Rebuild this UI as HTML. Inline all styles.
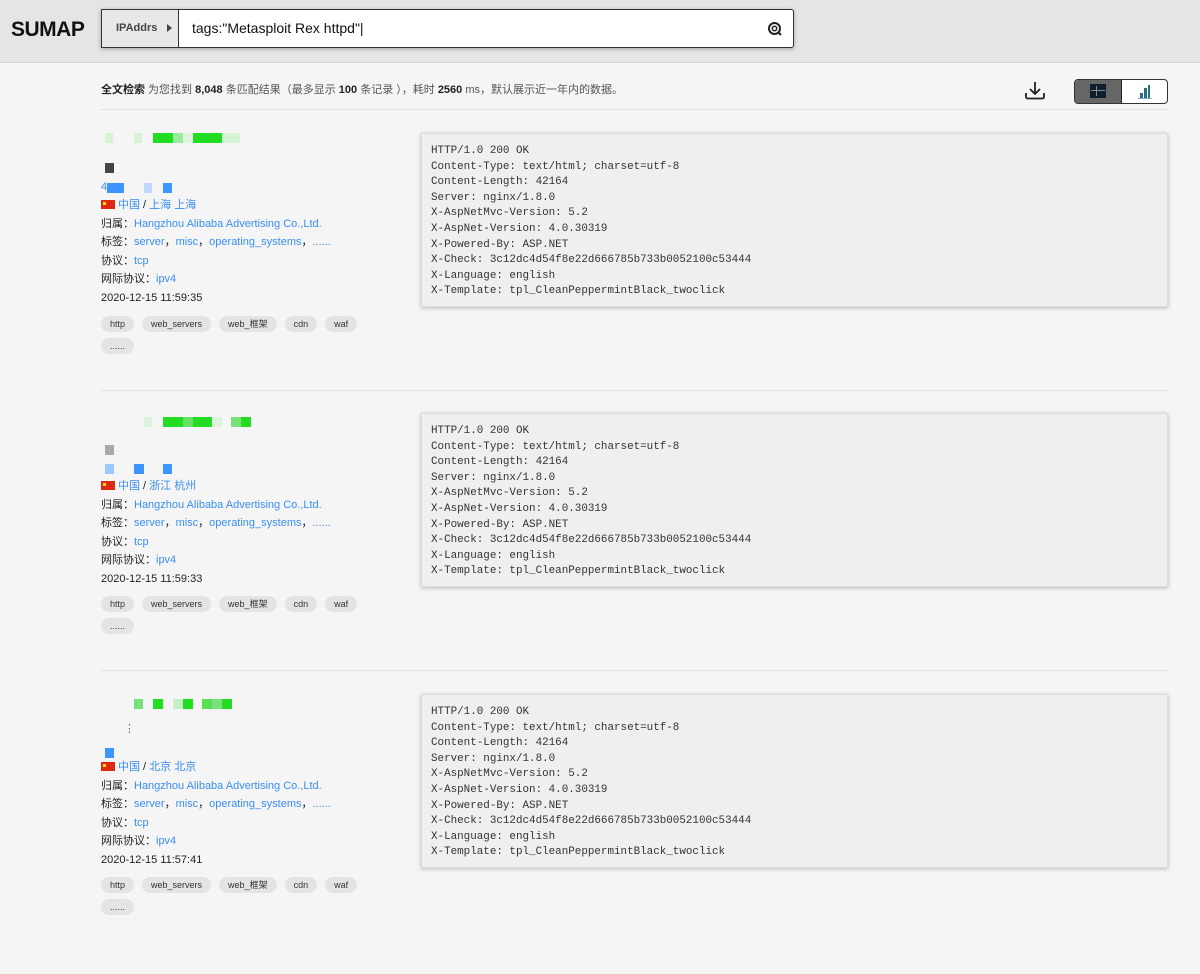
<!DOCTYPE html>
<html><head><meta charset="utf-8">
<style>
*{margin:0;padding:0;box-sizing:border-box}
body{width:1200px;height:906px;overflow:hidden;background:#f5f5f5;font-family:"Liberation Sans","Noto Sans CJK SC",sans-serif;color:#222;position:relative}
.hdr{position:absolute;left:0;top:0;width:1200px;height:63px;background:#e5e5e5;border-bottom:1px solid #d6d6d6}
.logo{position:absolute;left:11px;top:18px;font:900 21px/24px "Liberation Sans",sans-serif;letter-spacing:-0.5px;color:#111}
.search{position:absolute;left:101px;top:9px;width:693px;height:39px;border:1px solid #333;background:#fff;box-shadow:0 1px 4px rgba(0,0,0,.3);border-radius:0 3px 3px 0}
.ipa{position:absolute;left:0;top:0;width:77px;height:37px;background:#e8e8e8;border-right:1px solid #333;font:bold 11px "Liberation Sans",sans-serif;color:#444;line-height:37px;padding-left:14px}
.ipa:after{content:"";position:absolute;right:6px;top:14px;border-left:5px solid #444;border-top:4px solid transparent;border-bottom:4px solid transparent}
.q{position:absolute;left:90px;top:0;line-height:37px;font-size:14px;color:#111}
.sum{position:absolute;left:101px;top:81px;font-size:11px;color:#555}
.sum b{color:#222}
.hr{position:absolute;left:101px;width:1067px;height:1px;background:#e0e0e0}
.tg{position:absolute;top:79px;left:1074px;width:94px;height:25px;border:1px solid #333;border-radius:4px;overflow:hidden;background:#fff}
.rec{position:absolute;left:0;width:1200px;height:280px}
.px{position:absolute;height:10px}
.info{position:absolute;left:101px;font-size:11px;line-height:18.6px;color:#222}
.info a{color:#3a8ef0;text-decoration:none}
.flag{display:inline-block;width:14px;height:9px;background:#de2910;vertical-align:-1px;margin-right:3px;position:relative}
.flag:after{content:"";position:absolute;left:2px;top:2px;width:3px;height:3px;background:#ffde00}
.tags{position:absolute;left:101px;top:183px;width:300px;font-size:0}
.tag{display:inline-block;height:16px;line-height:16px;padding:0 9px;border-radius:8px;background:#e4e4e4;font-size:9px;color:#333;margin:0 8px 6px 0}
.code{position:absolute;left:421px;top:0;width:747px;height:174px;background:#efefef;border:1px solid #ddd;box-shadow:0 1px 4px rgba(0,0,0,.25);padding:10px 9px;font:10.9px/15.6px "Liberation Mono","DejaVu Sans Mono",monospace;color:#333;white-space:pre}
</style></head><body>
<div class="hdr">
<div class="logo">SUMAP</div>
<div class="search"><div class="ipa">IPAddrs</div><div class="q">tags:"Metasploit Rex httpd"|</div>
<svg style="position:absolute;left:665px;top:11px" width="16" height="16" viewBox="0 0 16 16"><circle cx="7.5" cy="7.5" r="5.5" fill="none" stroke="#222" stroke-width="2"/><circle cx="7.5" cy="7.5" r="2.2" fill="none" stroke="#222" stroke-width="1.5"/><path d="M11 11l3 3" stroke="#222" stroke-width="2"/></svg></div>
</div>
<div class="sum"><b>全文检索</b> 为您找到 <b>8,048</b> 条匹配结果（最多显示 <b>100</b> 条记录 ），耗时 <b>2560</b> ms，默认展示近一年内的数据。</div>
<svg style="position:absolute;left:1024px;top:81px" width="22" height="20" viewBox="0 0 22 20"><path d="M11 1v12M6 8l5 5 5-5" fill="none" stroke="#222" stroke-width="1.8"/><path d="M2 12v3.5q0 2 2 2h14q2 0 2-2V12" fill="none" stroke="#222" stroke-width="1.8"/></svg>
<div class="tg"><div style="position:absolute;left:0;top:0;width:47px;height:23px;background:#666;border-right:1px solid #222"></div>
<div style="position:absolute;left:15px;top:4px;width:16px;height:14px;background:#0f1e2e"></div>
<div style="position:absolute;left:21px;top:6px;width:1px;height:10px;background:#888"></div>
<div style="position:absolute;left:16px;top:10px;width:14px;height:1px;background:#888"></div>
<div style="position:absolute;left:65px;top:13px;width:3px;height:5px;background:#2a6f7f"></div>
<div style="position:absolute;left:69px;top:8px;width:3px;height:10px;background:#2a6f7f"></div>
<div style="position:absolute;left:73px;top:5px;width:2px;height:13px;background:#2a6f7f"></div>
<div style="position:absolute;left:63px;top:18px;width:14px;height:1px;background:#8ab"></div></div>
<div class="hr" style="top:109px"></div>
<div class="hr" style="top:390px"></div>
<div class="hr" style="top:670px"></div>

<!-- record 1 -->
<div class="rec" style="top:133px">
<div class="px" style="left:105px;top:0;width:8px;background:#d6f3d6"></div>
<div class="px" style="left:134px;top:0;width:8px;background:#d6f3d6"></div>
<div class="px" style="left:153px;top:0;width:20px;background:#22dd22"></div>
<div class="px" style="left:173px;top:0;width:10px;background:#99ea99"></div>
<div class="px" style="left:183px;top:0;width:10px;background:#e0f3e0"></div>
<div class="px" style="left:193px;top:0;width:29px;background:#22dd22"></div>
<div class="px" style="left:222px;top:0;width:18px;background:#d6f3d6"></div>
<div class="px" style="left:105px;top:30px;width:9px;background:#444"></div>
<div style="position:absolute;left:101px;top:48px;font-size:11px;color:#3a8ef0">4</div>
<div class="px" style="left:107px;top:50px;width:17px;background:#3d96ff"></div>
<div class="px" style="left:144px;top:50px;width:8px;background:#c0d8ff"></div>
<div class="px" style="left:163px;top:50px;width:9px;background:#3d96ff"></div>
<div class="info" style="top:63px"><span class="flag"></span><a>中国</a> / <a>上海 上海</a><br>归属：<a>Hangzhou Alibaba Advertising Co.,Ltd.</a><br>标签：<a>server</a>，<a>misc</a>，<a>operating_systems</a>，<a>......</a><br>协议：<a>tcp</a><br>网际协议：<a>ipv4</a><br>2020-12-15 11:59:35</div>
<div class="tags"><span class="tag">http</span><span class="tag">web_servers</span><span class="tag">web_框架</span><span class="tag">cdn</span><span class="tag">waf</span><span class="tag">......</span></div>
<div class="code">HTTP/1.0 200 OK
Content-Type: text/html; charset=utf-8
Content-Length: 42164
Server: nginx/1.8.0
X-AspNetMvc-Version: 5.2
X-AspNet-Version: 4.0.30319
X-Powered-By: ASP.NET
X-Check: 3c12dc4d54f8e22d666785b733b0052100c53444
X-Language: english
X-Template: tpl_CleanPeppermintBlack_twoclick</div>
</div>

<!-- record 2 -->
<div class="rec" style="top:413px">
<div class="px" style="left:144px;top:4px;width:8px;background:#def3de"></div>
<div class="px" style="left:163px;top:4px;width:20px;background:#22dd22"></div>
<div class="px" style="left:183px;top:4px;width:10px;background:#66e066"></div>
<div class="px" style="left:193px;top:4px;width:19px;background:#22dd22"></div>
<div class="px" style="left:212px;top:4px;width:10px;background:#def3de"></div>
<div class="px" style="left:231px;top:4px;width:10px;background:#77e077"></div>
<div class="px" style="left:241px;top:4px;width:10px;background:#22dd22"></div>
<div class="px" style="left:105px;top:32px;width:9px;background:#aaa"></div>
<div class="px" style="left:105px;top:51px;width:9px;background:#9cc8ff"></div>
<div class="px" style="left:134px;top:51px;width:10px;background:#3d96ff"></div>
<div class="px" style="left:163px;top:51px;width:9px;background:#3d96ff"></div>
<div class="info" style="top:64px"><span class="flag"></span><a>中国</a> / <a>浙江 杭州</a><br>归属：<a>Hangzhou Alibaba Advertising Co.,Ltd.</a><br>标签：<a>server</a>，<a>misc</a>，<a>operating_systems</a>，<a>......</a><br>协议：<a>tcp</a><br>网际协议：<a>ipv4</a><br>2020-12-15 11:59:33</div>
<div class="tags"><span class="tag">http</span><span class="tag">web_servers</span><span class="tag">web_框架</span><span class="tag">cdn</span><span class="tag">waf</span><span class="tag">......</span></div>
<div class="code">HTTP/1.0 200 OK
Content-Type: text/html; charset=utf-8
Content-Length: 42164
Server: nginx/1.8.0
X-AspNetMvc-Version: 5.2
X-AspNet-Version: 4.0.30319
X-Powered-By: ASP.NET
X-Check: 3c12dc4d54f8e22d666785b733b0052100c53444
X-Language: english
X-Template: tpl_CleanPeppermintBlack_twoclick</div>
</div>

<!-- record 3 -->
<div class="rec" style="top:694px">
<div class="px" style="left:134px;top:5px;width:9px;background:#77e077"></div>
<div class="px" style="left:153px;top:5px;width:10px;background:#22dd22"></div>
<div class="px" style="left:173px;top:5px;width:10px;background:#c5f0c5"></div>
<div class="px" style="left:183px;top:5px;width:10px;background:#22dd22"></div>
<div class="px" style="left:202px;top:5px;width:10px;background:#55e055"></div>
<div class="px" style="left:212px;top:5px;width:10px;background:#77e077"></div>
<div class="px" style="left:222px;top:5px;width:10px;background:#22dd22"></div>
<div style="position:absolute;left:124px;top:28px;font-size:11px;color:#666">⋮</div>
<div class="px" style="left:105px;top:54px;width:9px;background:#3d96ff"></div>
<div class="info" style="top:64px"><span class="flag"></span><a>中国</a> / <a>北京 北京</a><br>归属：<a>Hangzhou Alibaba Advertising Co.,Ltd.</a><br>标签：<a>server</a>，<a>misc</a>，<a>operating_systems</a>，<a>......</a><br>协议：<a>tcp</a><br>网际协议：<a>ipv4</a><br>2020-12-15 11:57:41</div>
<div class="tags"><span class="tag">http</span><span class="tag">web_servers</span><span class="tag">web_框架</span><span class="tag">cdn</span><span class="tag">waf</span><span class="tag">......</span></div>
<div class="code">HTTP/1.0 200 OK
Content-Type: text/html; charset=utf-8
Content-Length: 42164
Server: nginx/1.8.0
X-AspNetMvc-Version: 5.2
X-AspNet-Version: 4.0.30319
X-Powered-By: ASP.NET
X-Check: 3c12dc4d54f8e22d666785b733b0052100c53444
X-Language: english
X-Template: tpl_CleanPeppermintBlack_twoclick</div>
</div>
</body></html>
